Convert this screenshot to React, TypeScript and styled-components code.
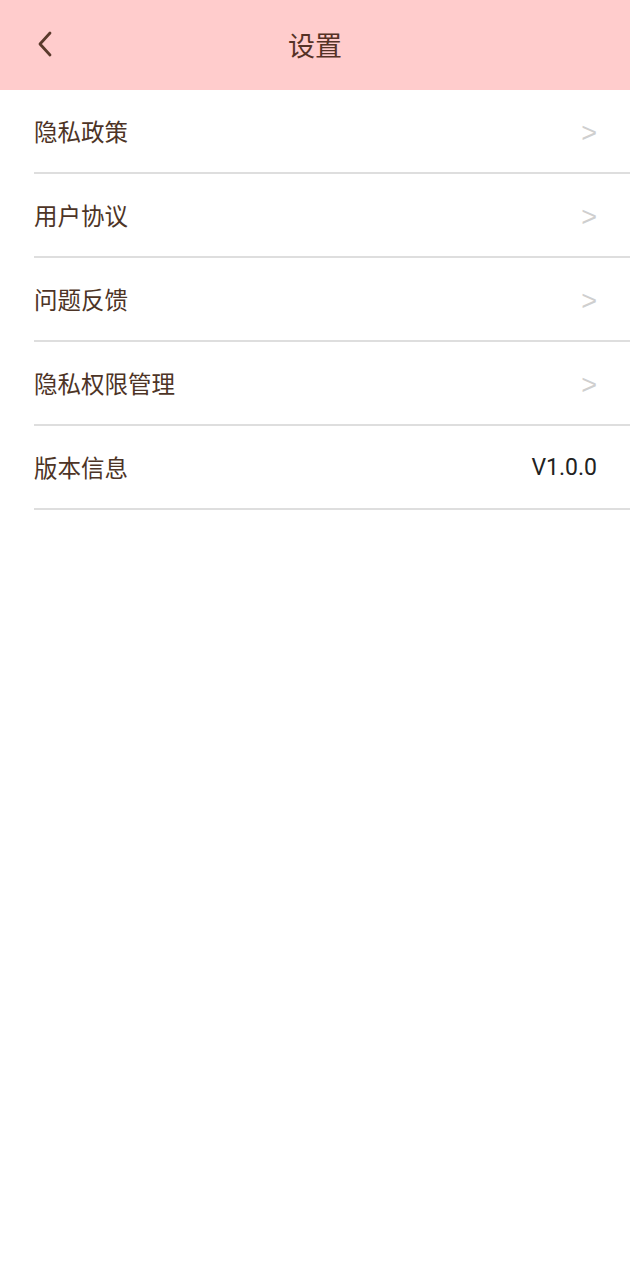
import styled, { createGlobalStyle } from "styled-components";

const GlobalStyle = createGlobalStyle`
  body {
    margin: 0;
    background: #ffffff;
    font-family: "Noto Sans CJK SC", "Noto Sans", sans-serif;
  }
`;

interface Item {
  label: string;
  value?: string;
}

const items: Item[] = [
  { label: "隐私政策" },
  { label: "用户协议" },
  { label: "问题反馈" },
  { label: "隐私权限管理" },
  { label: "版本信息", value: "V1.0.0" },
];

const App = () => {
  return (
    <Page>
      <GlobalStyle />
      <Header>
        <Back aria-label="back">
          <svg width="16" height="26" viewBox="0 0 16 26">
            <path d="M13 2 L3 13 L13 24" fill="none" stroke="#5a3a2c" strokeWidth="2.8" strokeLinecap="round" strokeLinejoin="round" />
          </svg>
        </Back>
        <Title>设置</Title>
      </Header>
      <List>
        {items.map((item) => (
          <Row key={item.label}>
            <Label>{item.label}</Label>
            {item.value ? <Value>{item.value}</Value> : <Arrow>&gt;</Arrow>}
          </Row>
        ))}
      </List>
    </Page>
  );
};

export default App;

const Page = styled.div`
  width: 630px;
  min-height: 1280px;
  background: #ffffff;
`;

const Header = styled.div`
  position: relative;
  height: 90px;
  background: #ffcccc;
  display: flex;
  align-items: center;
  justify-content: center;
`;

const Back = styled.div`
  position: absolute;
  left: 37px;
  top: 31px;
  display: flex;
`;

const Title = styled.div`
  font-size: 27px;
  color: #553226;
  line-height: 1;
  margin-top: -1px;
`;

const List = styled.div`
  padding-left: 34px;
`;

const Row = styled.div`
  height: 82px;
  display: flex;
  align-items: center;
  justify-content: space-between;
  padding-right: 33px;
  border-bottom: 2px solid #dedede;
`;

const Label = styled.span`
  font-size: 23.5px;
  color: #4d3426;
`;

const Arrow = styled.span`
  font-family: "Liberation Sans", sans-serif;
  font-size: 27px;
  line-height: 1;
  margin-top: 4px;
  color: #cfcfcf;
`;

const Value = styled.span`
  font-family: "Roboto", "Liberation Sans", sans-serif;
  font-size: 23px;
  color: #222222;
`;
